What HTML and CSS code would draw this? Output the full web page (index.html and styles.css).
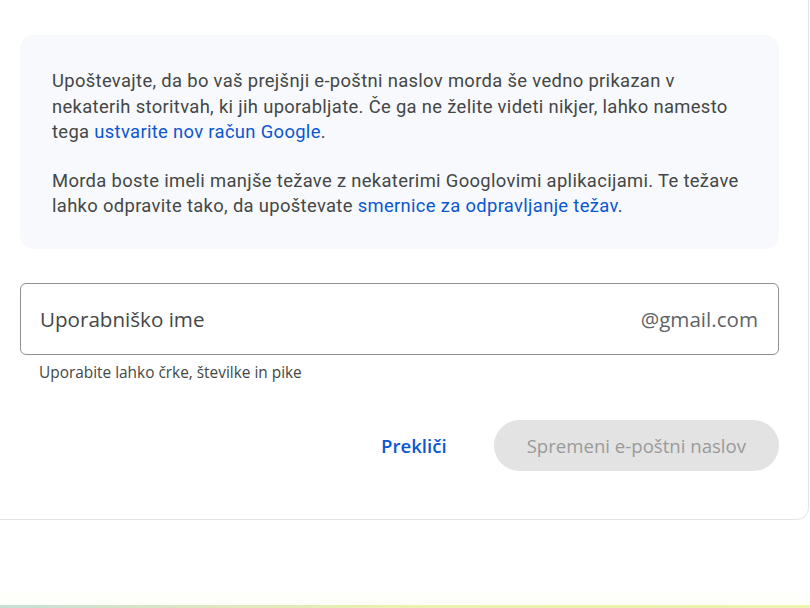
FILE: index.html
```html
<!DOCTYPE html>
<html lang="sl">
<head>
<meta charset="utf-8">
<title>Spremeni e-poštni naslov</title>
<link rel="stylesheet" href="styles.css">
</head>
<body>
<div class="page">
  <div class="card">
    <div class="notice">
      <p>Upoštevajte, da bo vaš prejšnji e-poštni naslov morda še vedno prikazan v nekaterih storitvah, ki jih uporabljate. Če ga ne želite videti nikjer, lahko namesto tega <a href="#">ustvarite nov račun Google</a>.</p>
      <p>Morda boste imeli manjše težave z nekaterimi Googlovimi aplikacijami. Te težave lahko odpravite tako, da upoštevate <a href="#">smernice za odpravljanje težav</a>.</p>
    </div>
    <div class="field">
      <span class="placeholder">Uporabniško ime</span>
      <span class="suffix">@gmail.com</span>
    </div>
    <div class="helper">Uporabite lahko črke, številke in pike</div>
    <div class="actions">
      <button class="btn-text">Prekliči</button>
      <button class="btn-filled" disabled>Spremeni e-poštni naslov</button>
    </div>
  </div>
  <div class="spacer"></div>
  <div class="glow"></div>
</div>
</body>
</html>
```
FILE: styles.css
```css
html, body {
  margin: 0;
  padding: 0;
  background: #ffffff;
}
body {
  width: 810px;
  height: 608px;
  overflow: hidden;
  font-family: Roboto, "Liberation Sans", sans-serif;
  color: #1f1f1f;
}
.page {
  display: flex;
  flex-direction: column;
  height: 608px;
}
.card {
  margin: -12px 1px 0 -12px;
  padding: 46px 29px 48px 31px;
  border: 1px solid #e4e4e4;
  border-radius: 0 0 12px 12px;
  background: #fff;
}
.notice {
  background: #f7f9fc;
  border-radius: 14px;
  padding: 33px 36px 30px 32px;
}
.notice p {
  margin: 0;
  font-size: 18.4px;
  line-height: 25.5px;
  color: #444746;
  letter-spacing: 0.33px;
}
.notice p + p {
  margin-top: 23px;
}
.notice a {
  color: #0b57d0;
  text-decoration: none;
}
.field {
  box-sizing: border-box;
  margin-top: 34px;
  height: 72px;
  border: 1px solid #8e918f;
  border-radius: 6px;
  display: flex;
  align-items: center;
  justify-content: space-between;
  padding: 0 20px 0 19px;
  font-family: "Open Sans", Roboto, sans-serif;
  font-size: 20.6px;
}
.placeholder {
  color: #444746;
}
.suffix {
  color: #5f6368;
}
.helper {
  margin: 8px 0 0 19px;
  font-family: "Open Sans", Roboto, sans-serif;
  font-size: 15.4px;
  line-height: 20px;
  color: #444746;
}
.actions {
  margin-top: 37px;
  display: flex;
  justify-content: flex-end;
  align-items: center;
  gap: 25px;
}
.actions button {
  font-family: "Open Sans", Roboto, sans-serif;
  font-size: 18.6px;
  border: none;
  height: 51px;
  border-radius: 26px;
  cursor: pointer;
}
.btn-text {
  background: transparent;
  color: #0b57d0;
  font-weight: 600;
  padding: 0 22px;
}
.btn-filled {
  background: #e3e3e3;
  color: #9a9a9a;
  padding: 0 33px;
}
.spacer {
  flex: 1;
  background: linear-gradient(to bottom, #ffffff 80%, #fdfef8 100%);
}
.glow {
  height: 3px;
  background: linear-gradient(to right, #c6dfd6 0%, #dde6c2 25%, #eaf0ad 50%, #eef2b0 100%);
}
```
